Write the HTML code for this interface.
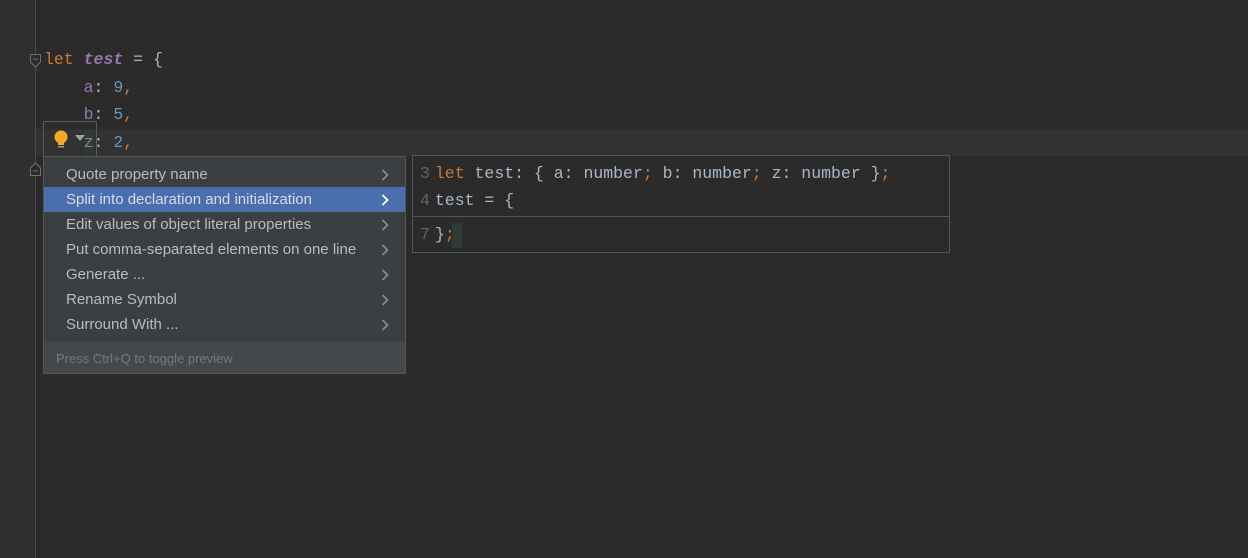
<!DOCTYPE html>
<html><head><meta charset="utf-8"><style>
*{margin:0;padding:0;box-sizing:border-box}
body{width:1248px;height:558px;background:#2b2b2b;position:relative;overflow:hidden;font-family:"Liberation Sans",sans-serif}
.gut{position:absolute;left:0;top:0;width:35px;height:558px;background:#2f2f2f}
.gl{position:absolute;left:35px;top:0;width:1px;height:558px;background:#4a4a4a}
.cur{position:absolute;left:36px;top:129px;width:1212px;height:27px;background:#323232}
.code{position:absolute;font-family:"Liberation Mono",monospace;font-size:16.5px;white-space:pre;color:#a9b7c6;line-height:27px}
.k{color:#cc7832}.v{color:#9876aa}.n{color:#6897bb}.vi{color:#9876aa;font-style:italic;font-weight:bold}
.menu{position:absolute;left:43px;top:156px;width:363px;height:218px;background:#3c3f41;border:1px solid #555}
.it{position:absolute;left:0;width:361px;height:25px;line-height:26px;color:#bbbbbb;font-size:15px;padding-left:22px}
.it.sel{background:#4b6eaf;color:#d8dde6}
.it svg{position:absolute;left:337px;top:7px}
.foot{position:absolute;left:0;top:185px;width:361px;height:31px;background:#45484a;color:#787878;font-size:13px;line-height:33px;padding-left:12px}
.prev{position:absolute;left:412px;top:155px;width:538px;height:98px;background:#2b2b2b;border:1px solid #555}
.ln{color:#606366;margin-right:5px}
</style></head><body>
<div class="gut"></div><div class="gl"></div>
<div class="cur"></div>
<svg style="position:absolute;left:29px;top:53px" width="13" height="16"><path d="M1.5 1.5H11.5V9L6.5 14L1.5 9Z" fill="#2b2b2b" stroke="#707070" stroke-width="1"/><path d="M4 6H9" stroke="#707070"/></svg>
<svg style="position:absolute;left:29px;top:161px" width="13" height="16"><path d="M1.5 14.5H11.5V7L6.5 2L1.5 7Z" fill="#2b2b2b" stroke="#707070" stroke-width="1"/><path d="M4 10H9" stroke="#707070"/></svg>
<div class="code" style="left:44px;top:46px"><span class="k">let</span> <span class="vi">test</span> = {</div>
<div class="code" style="left:44px;top:74px">    <span class="v">a</span>: <span class="n">9</span><span class="k">,</span></div>
<div class="code" style="left:44px;top:101px">    <span class="v">b</span>: <span class="n">5</span><span class="k">,</span></div>
<div style="position:absolute;left:84px;top:130px;width:10px;height:26px;background:#2e3b32"></div>
<div class="code" style="left:44px;top:129px">    <span class="v">z</span>: <span class="n">2</span><span class="k">,</span></div>
<div style="position:absolute;left:43px;top:121px;width:54px;height:36px;border:1px solid #5a5a5a;border-bottom:none"></div>
<svg style="position:absolute;left:52px;top:129px" width="40" height="22"><circle cx="9" cy="8" r="6.5" fill="#f4a824"/><rect x="6" y="13" width="6" height="3" fill="#f4a824"/><rect x="6" y="17" width="6" height="1.5" fill="#999"/><path d="M23 6H33L28 12Z" fill="#a0a0a0"/></svg>
<div class="menu">
<div class="it" style="top:5px">Quote property name<svg width="8" height="12"><path d="M1.5 1L6.5 6L1.5 11" fill="none" stroke="#8c8c8c" stroke-width="1.6"/></svg></div>
<div class="it sel" style="top:30px">Split into declaration and initialization<svg width="8" height="12"><path d="M1.5 1L6.5 6L1.5 11" fill="none" stroke="#fff" stroke-width="1.8"/></svg></div>
<div class="it" style="top:55px">Edit values of object literal properties<svg width="8" height="12"><path d="M1.5 1L6.5 6L1.5 11" fill="none" stroke="#8c8c8c" stroke-width="1.6"/></svg></div>
<div class="it" style="top:80px">Put comma-separated elements on one line<svg width="8" height="12"><path d="M1.5 1L6.5 6L1.5 11" fill="none" stroke="#8c8c8c" stroke-width="1.6"/></svg></div>
<div class="it" style="top:105px">Generate ...<svg width="8" height="12"><path d="M1.5 1L6.5 6L1.5 11" fill="none" stroke="#8c8c8c" stroke-width="1.6"/></svg></div>
<div class="it" style="top:130px">Rename Symbol<svg width="8" height="12"><path d="M1.5 1L6.5 6L1.5 11" fill="none" stroke="#8c8c8c" stroke-width="1.6"/></svg></div>
<div class="it" style="top:155px">Surround With ...<svg width="8" height="12"><path d="M1.5 1L6.5 6L1.5 11" fill="none" stroke="#8c8c8c" stroke-width="1.6"/></svg></div>
<div class="foot">Press Ctrl+Q to toggle preview</div>
</div>
<div class="prev">
<div class="code" style="left:7px;top:4px"><span class="ln">3</span><span class="k">let</span> test: { a: number<span class="k">;</span> b: number<span class="k">;</span> z: number }<span class="k">;</span></div>
<div class="code" style="left:7px;top:31px"><span class="ln">4</span>test = {</div>
<div style="position:absolute;left:0;top:60px;width:536px;height:1px;background:#555"></div>
<div style="position:absolute;left:39px;top:67px;width:10px;height:25px;background:#2e3b32"></div>
<div class="code" style="left:7px;top:65px"><span class="ln">7</span>}<span class="k">;</span></div>
</div>
</body></html>
